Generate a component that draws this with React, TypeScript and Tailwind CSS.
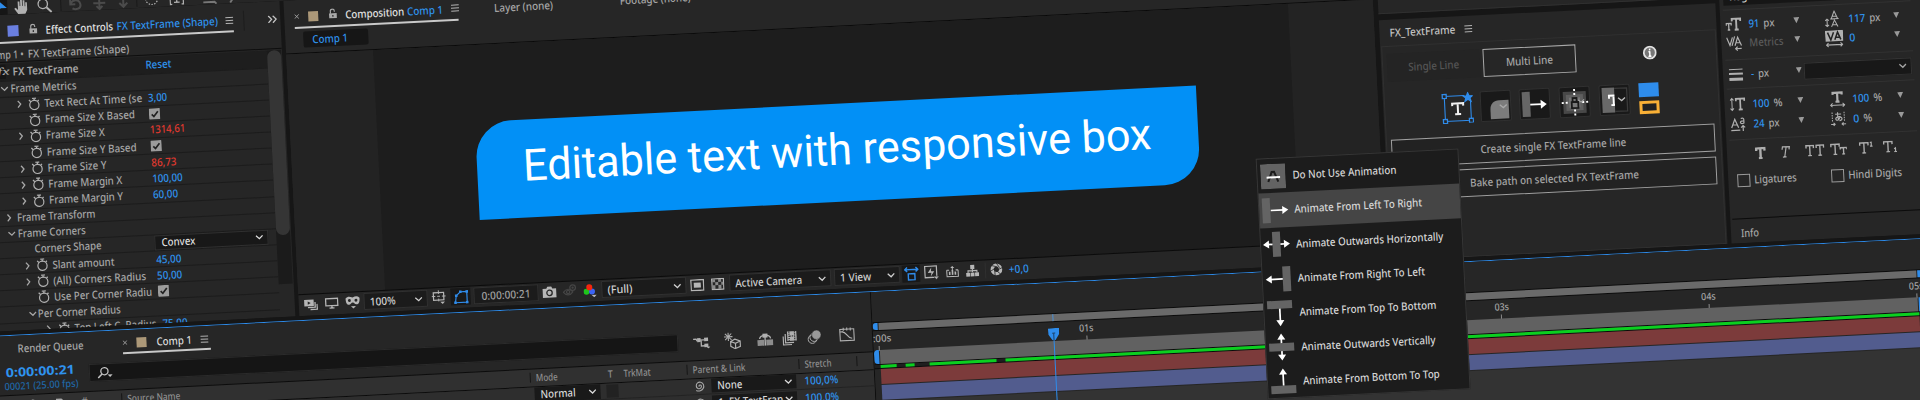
import { useLayoutEffect, useRef, useState } from "react";
import type { ReactNode } from "react";
import { clsx } from "clsx";

type Kids = { children?: ReactNode; className?: string };

/* A line of text squeezed or stretched horizontally to fill the width of its box. */
function Fit({ children, className }: Kids) {
  const box = useRef<HTMLSpanElement>(null);
  const text = useRef<HTMLSpanElement>(null);
  const [scale, setScale] = useState(1);
  useLayoutEffect(() => {
    if (box.current && text.current) {
      const w = parseFloat(getComputedStyle(box.current).width);
      const tw = parseFloat(getComputedStyle(text.current).width);
      if (tw > 0) setScale(w / tw);
    }
  }, [children]);
  return (
    <span ref={box} className={clsx("flex shrink-0 whitespace-nowrap", className)}>
      <span ref={text} className="inline-block shrink-0 origin-left" style={{ transform: `scaleX(${scale})` }}>
        {children}
      </span>
    </span>
  );
}

function Svg({ children, className, box = "0 0 16 16" }: Kids & { box?: string }) {
  return (
    <svg viewBox={box} className={clsx("block shrink-0", className)} fill="none" stroke="currentColor" strokeWidth="1.3">
      {children}
    </svg>
  );
}

const Chevron = ({ className = "" }) => (
  <Svg box="0 0 8 8" className={clsx("size-2", className)}>
    <path d="M.7 2.3 4 5.5l3.3-3.2" />
  </Svg>
);
const Right = ({ className = "" }) => (
  <Svg box="0 0 8 8" className={clsx("size-2 text-[#a8a8a8]", className)}>
    <path d="M2.6 .6 5.4 4 2.6 7.4" />
  </Svg>
);
const Tri = ({ className = "" }) => (
  <Svg box="0 0 6 6" className={clsx("size-[6px]", className)}>
    <path d="M0 0h6L3 6z" fill="currentColor" stroke="none" />
  </Svg>
);
const Burger = ({ className = "" }) => (
  <Svg box="0 0 8 8" className={clsx("size-2 text-[#b4b4b4]", className)}>
    <path d="M0 1h8M0 4h8M0 7h8" strokeWidth="1" />
  </Svg>
);
const Lock = ({ className = "" }) => (
  <Svg box="0 0 10 12" className={clsx("h-[11px] w-[9px] text-[#a9a9a9]", className)}>
    <rect x="1" y="5.5" width="8.5" height="5.5" fill="currentColor" stroke="none" />
    <path d="M2.6 6V3.2a2.2 2.2 0 0 1 4.400 0V4" />
    <path d="M5.200 7.400v2" stroke="#262626" />
  </Svg>
);
const Cross = ({ className = "" }) => (
  <Svg box="0 0 6 6" className={clsx("size-[5px] text-[#a9a9a9]", className)}>
    <path d="m.5 .5 5 5m0-5-5 5" strokeWidth="1" />
  </Svg>
);
const Stopwatch = ({ className = "" }) => (
  <Svg box="0 0 12 13" className={clsx("h-[13px] w-3 text-[#b0b0b0]", className)}>
    <circle cx="6" cy="7.6" r="4.600" strokeWidth="1.2" />
    <path d="M4 .8h4M6 1v2.400M.8 2.400 2.600 4.200M9.400 4 10.600 2.800" strokeWidth="1.3" />
  </Svg>
);
const Check = ({ className = "" }) => (
  <Svg box="0 0 11 11" className={clsx("size-[11.500px]", className)}>
    <rect width="11" height="11" rx="1" fill="#9c9c9c" stroke="none" />
    <path d="m2.600 5.600 2 2.200 4-4.800" stroke="#222" strokeWidth="1.6" />
  </Svg>
);

/* ---------- Effect controls ---------- */

function Row({ children, className }: Kids) {
  return <div className={clsx("flex h-[16.15px] shrink-0 items-center border-t border-[#1c1c1c]", className)}>{children}</div>;
}

function Prop({ label, lw, value, arrow, red, check }: { label: string; lw: string; value?: string; arrow?: boolean; red?: boolean; check?: boolean }) {
  return (
    <Row className="pl-[50px]">
      <span className="w-[13px] shrink-0">{arrow && <Right />}</span>
      <Stopwatch />
      <span className="ml-[4px] w-[103.5px] shrink-0"><Fit className={lw}>{label}</Fit></span>
      {check ? <Check /> : <Fit className={clsx(red ? "text-[#e2392f]" : "text-[#2f93ee]", value === "1314,61" ? "w-[35.5px]" : value === "100,00" ? "w-[30.5px]" : value === "3,00" ? "w-[19px]" : "w-[25px]")}>{value}</Fit>}
    </Row>
  );
}

function EffectControls() {
  return (
    <section className="flex w-[318.5px] shrink-0 flex-col overflow-hidden bg-[#262626]">
      <header className="flex h-[29px] shrink-0 items-start">
        <div className="flex h-[29px] w-[272px] shrink-0 items-center border-b-2 border-[#c9c9c9] pl-[46px]">
          <span className="mt-1.5 size-[11px] shrink-0 bg-[#6a7fe0]" />
          <Lock className="mt-1 ml-[10px]" />
          <Fit className="mt-1.5 ml-[8px] w-[67.5px] text-[#e2e2e2]">Effect Controls</Fit>
          <Fit className="mt-1.5 ml-[3px] w-[101.5px] text-[#2f93ee]">FX TextFrame (Shape)</Fit>
          <Burger className="mt-1.5 ml-[8px]" />
        </div>
        <span className="mt-2 ml-[10px] h-5 w-px bg-[#1d1d1d]" />
        <Svg box="0 0 10 8" className="mt-[14px] ml-[23px] h-2 w-[10px] text-[#c4c4c4]">
          <path d="m1 .5 3.300 3.500L1 7.500M5.500 .5 8.800 4 5.500 7.500" />
        </Svg>
      </header>
      <div className="flex h-[18.500px] shrink-0 items-center border-b border-[#0e0e0e] pt-1 pl-[23px]">
        <Fit className="w-[38px]">Comp 1 •</Fit>
        <Fit className="ml-[4px] w-[101.500px]">FX TextFrame (Shape)</Fit>
      </div>
      <div className="mt-[1.500px] flex min-h-0 flex-1">
        <div className="w-[304px] shrink-0">
          <div className="flex h-[16.500px] items-center bg-[#1e1e1e] pl-[30px]">
            <Fit className="w-[12px] bg-[#161616] pl-[4px] font-serif text-[11px] italic">fx</Fit>
            <Fit className="ml-[7px] w-[66px] font-semibold">FX TextFrame</Fit>
            <Fit className="ml-[67px] w-[26px] text-[#2f93ee]">Reset</Fit>
          </div>
          <Row className="pl-[36px]"><Chevron /><Fit className="ml-[2px] w-[66px]">Frame Metrics</Fit></Row>
          <Prop arrow label="Text Rect At Time (se" lw="w-[98px]" value="3,00" />
          <Prop label="Frame Size X Based" lw="w-[90px]" check />
          <Prop arrow label="Frame Size X" lw="w-[59px]" value="1314,61" red />
          <Prop label="Frame Size Y Based" lw="w-[90px]" check />
          <Prop arrow label="Frame Size Y" lw="w-[59px]" value="86,73" red />
          <Prop arrow label="Frame Margin X" lw="w-[74px]" value="100,00" />
          <Prop arrow label="Frame Margin Y" lw="w-[74px]" value="60,00" />
          <Row className="pl-[34px]"><Right /><Fit className="ml-[4px] w-[78.500px]">Frame Transform</Fit></Row>
          <Row className="pl-[36px]"><Chevron /><Fit className="ml-[2px] w-[68px]">Frame Corners</Fit></Row>
          <Row className="pl-[62px]">
            <Fit className="w-[67px]">Corners Shape</Fit>
            <div className="ml-[53px] flex h-[15px] w-[114px] items-center justify-between border border-[#303030] bg-[#181818] pr-1 pl-[6px] text-[#dedede]">
              <Fit className="w-[34px]">Convex</Fit><Chevron />
            </div>
          </Row>
          <Prop arrow label="Slant amount" lw="w-[62px]" value="45,00" />
          <Prop arrow label="(All) Corners Radius" lw="w-[93px]" value="50,00" />
          <Prop label="Use Per Corner Radiu" lw="w-[98px]" check />
          <Row className="pl-[53px]"><Chevron /><Fit className="ml-[1px] w-[83px]">Per Corner Radius</Fit></Row>
          <Row className="pl-[68px]">
            <Right /><Stopwatch className="ml-[6px]" /><Fit className="ml-[4px] w-[82px]">Top Left C. Radius</Fit>
            <Fit className="ml-[6px] w-[25px] text-[#2f93ee]">75,00</Fit>
          </Row>
        </div>
        <div className="h-[234px] w-[14px] shrink-0 bg-[#1b1b1b]">
          <div className="h-[185px] rounded-full bg-[#353535]" />
        </div>
      </div>
    </section>
  );
}

/* ---------- Composition viewer ---------- */

function Drop({ children, className }: Kids) {
  return (
    <div className={clsx("flex h-[16.500px] shrink-0 items-center justify-between rounded-[1px] border border-[#303030] bg-[#1b1b1b] pr-[4px] pl-[5px] text-[#d0d0d0]", className)}>
      {children}
      <Chevron />
    </div>
  );
}

function Viewer() {
  return (
    <section className="flex w-[1088px] shrink-0 flex-col bg-[#262626]">
      <header className="flex h-[29px] shrink-0 items-start">
        <div className="ml-[10px] flex h-[29px] w-[164px] shrink-0 items-center border-b-2 border-[#c9c9c9]">
          <Cross className="mt-1.5" />
          <span className="mt-1.5 ml-[9px] size-[10px] shrink-0 bg-[#ac9878]" />
          <Lock className="mt-1 ml-[10px]" />
          <Fit className="mt-1.5 ml-[8px] w-[59px] text-[#e2e2e2]">Composition</Fit>
          <Fit className="mt-1.5 ml-[3px] w-[36px] text-[#2f93ee]">Comp 1</Fit>
          <Burger className="mt-1 ml-[8px]" />
        </div>
        <Fit className="mt-[11px] ml-[36px] w-[59px]">Layer (none)</Fit>
        <Fit className="mt-[10px] ml-[67px] w-[71px]">Footage (none)</Fit>
      </header>
      <div className="flex h-[24.500px] shrink-0 items-center border-b border-[#0b0b0b] pl-[18px]">
        <div className="mb-px flex h-[16px] w-[65px] items-center rounded-[2px] bg-[#161616] pl-[9px] text-[#2f93ee]">
          <Fit className="w-[35.500px]">Comp 1</Fit>
        </div>
      </div>
      <div className="flex h-[240px] shrink-0 bg-[#232323] pl-[86.500px]">
        <div className="w-[916px] bg-[#1d1d1d] pt-[77px]">
          <div className="mr-auto ml-[98.500px] flex h-[98.500px] w-[722px] items-center rounded-tl-[36px] rounded-br-[36px] bg-[#0290f6] pl-[46px] font-[Roboto] text-[44px] leading-none font-normal text-white">
            <Fit className="mb-[5px] w-[629px]">Editable text with responsive box</Fit>
          </div>
        </div>
      </div>
      <footer className="flex h-[21px] shrink-0 items-center border-t border-[#0b0b0b] pl-[5px] text-[#b6b6b6]">
        <Svg className="size-[14px]" box="0 0 14 14">
          <rect x=".5" y="2" width="9.500" height="6.500" fill="currentColor" stroke="none" />
          <path d="m4 3.600 3 1.700-3 1.700z" fill="#262626" stroke="none" />
          <path d="M11.300 4.500v5.300H4M13.300 6.500v5.300H6.500" />
        </Svg>
        <Svg className="ml-[7px] h-[13px] w-[14px]" box="0 0 14 13"><rect x="1" y="2" width="12" height="7" /><path d="M7 9v2.200M4.500 11.500h5" /></Svg>
        <Svg className="ml-[6px] size-[16px]">
          <path d="M1 3.500c2-2 4-2 7-.5 3-1.500 5-1.500 7 .5 0 4.500-1 6.500-3.500 6.500C10 10 9.500 8 8 8s-2 2-3.500 2C2 10 1 8 1 3.500z" fill="currentColor" stroke="none" />
          <circle cx="4.700" cy="5.800" r="1.500" fill="#262626" stroke="none" /><circle cx="11.300" cy="5.800" r="1.500" fill="#262626" stroke="none" />
          <path d="M6 11.500h5L8.500 14z" fill="currentColor" stroke="none" />
        </Svg>
        <Drop className="ml-[3px] w-[64px]"><Fit className="w-[26px]">100%</Fit></Drop>
        <Svg className="ml-[4px] size-[15px]"><rect x="2" y="2.500" width="11" height="8" /><path d="M7.500 0v4M7.500 9v3M0 6.500h4M11 6.500h4M6 6.500h3" strokeWidth="1" /><path d="M9 12.500h5L11.500 15z" fill="currentColor" stroke="none" /></Svg>
        <div className="ml-[4px] flex h-[17px] w-[20px] items-center justify-center bg-[#181818] text-[#2f8bea]">
          <Svg className="size-[15px]" box="0 0 14 14"><path d="M1.500 12.500 2.500 6l4-3.500H12.500v10z" strokeWidth="1.100" /><path d="M.3 11.300h2.400v2.400H.3zM11.300 1.300h2.400v2.400h-2.400zM11.300 11.300h2.400v2.400h-2.400zM5.300 1.300h2.400v2.400H5.300zM1.300 4.800h2.400v2.400H1.300z" fill="currentColor" stroke="none" /></Svg>
        </div>
        <div className="ml-[3px] flex h-[16.500px] w-[65px] items-center justify-center border border-[#303030] bg-[#1b1b1b] text-[#a0a0a0]"><Fit className="w-[49px]">0:00:00:21</Fit></div>
        <Svg className="ml-[4px] h-[13px] w-[14px]" box="0 0 14 13"><path d="M0 3h4l1-2h4l1 2h4v9H0z" fill="currentColor" stroke="none" /><circle cx="7" cy="7.300" r="2.700" stroke="#262626" fill="none" /></Svg>
        <Svg className="ml-[6px] size-[15px] text-[#454545]"><path d="M1 9c3-4 7-4 10 0-3 4-7 4-10 0z" /><circle cx="6" cy="9" r="1.700" /><circle cx="11" cy="4.500" r="3" /><circle cx="11" cy="4.500" r=".6" /></Svg>
        <Svg className="ml-[6px] size-[14px]" box="0 0 14 14"><g stroke="none"><circle cx="3" cy="8" r="3" fill="#1ec41b" /><circle cx="8.500" cy="8" r="3" fill="#3b63f3" /><circle cx="6" cy="3.800" r="3" fill="#f5260d" /><path d="M8 11.500h5L10.500 14z" fill="currentColor" /></g></Svg>
        <Drop className="ml-[4px] w-[85px]"><Fit className="w-[25px]">(Full)</Fit></Drop>
        <Svg className="ml-[4px] h-[12px] w-[14px]" box="0 0 14 12"><rect x=".7" y=".7" width="12.600" height="10.600" /><rect x="3.500" y="3.500" width="7" height="5" fill="currentColor" stroke="none" /></Svg>
        <Svg className="ml-[7px] h-[12px] w-[13px]" box="0 0 13 12"><rect x=".6" y=".6" width="11.800" height="10.800" /><path d="M1 1h3v3H1zM7 1h3v3H7zM4 4h3v3H4zM10 4h2v3h-2zM1 7h3v4H1zM7 7h3v4H7z" fill="#8a8a8a" stroke="none" /></Svg>
        <Drop className="ml-[5px] w-[101.500px]"><Fit className="w-[67px]">Active Camera</Fit></Drop>
        <Drop className="ml-[3.500px] w-[66px]"><Fit className="w-[31px]">1 View</Fit></Drop>
        <div className="ml-[2px] flex h-[17px] w-[18px] items-center justify-center bg-[#181818] text-[#2f8bea]">
          <Svg className="size-[15px]"><path d="M1 3.500h14M3.500 1.200 1 3.500l2.500 2.300M12.500 1.200 15 3.500l-2.500 2.300M4.500 8h7v6.500h-7z" strokeWidth="1.500" /></Svg>
        </div>
        <Svg className="ml-[4px] size-[15px]"><rect x="1" y="1" width="12.500" height="12" /><path d="M8 2.500 4 8h4l-1 4 4-5.500H7.500z" fill="currentColor" stroke="none" /><path d="M10 12h6l-3 3.500z" fill="currentColor" stroke="#262626" strokeWidth=".6" /></Svg>
        <Svg className="ml-[7px] size-[13px]"><path d="M1 6v8h14V6M1 6h3M15 6h-3M8 2v5" /><path d="M3.500 8h2v4h-2zM7 6h2v6H7zM10.500 8h2v4h-2zM5.500 3.500 8 1l2.500 2.500z" fill="currentColor" stroke="none" /></Svg>
        <Svg className="ml-[7px] size-[13px]"><path d="M5.500 1h5v5h-5zM0 10.500h5v4.500H0zM5.700 10.500h4.600v4.500H5.700zM11 10.500h5v4.500h-5z" fill="currentColor" stroke="none" /><path d="M8 6v4M2.500 10.500V8h11v2.500" /></Svg>
        <span className="ml-[6px] h-4 w-px bg-[#303030]" />
        <Svg className="ml-[4px] size-[13px]"><circle cx="8" cy="8" r="5.200" strokeWidth="4" /><path d="M8 0 12 6M15.500 6l-7 3M13 14 8 9.500M6 15.500v-7M.5 10l6-3.500M2.500 3l7 2" stroke="#262626" strokeWidth="1" /></Svg>
        <Fit className="ml-[6px] w-[20px] text-[#2f93ee]">+0,0</Fit>
      </footer>
    </section>
  );
}

/* ---------- FX_TextFrame panel ---------- */

function Tile({ children }: Kids) {
  return <div className="flex size-[31px] shrink-0 items-center justify-center rounded-[2px] border border-[#303030] bg-[#191919]">{children}</div>;
}

function FxPanel() {
  return (
    <section className="flex h-[241px] flex-col bg-[#262626]">
      <header className="flex h-[26.500px] shrink-0 items-center pl-[10.500px] text-[#c2c2c2]">
        <Fit className="w-[66px]">FX_TextFrame</Fit>
        <Burger className="ml-[9px]" />
      </header>
      <div className="mx-px flex min-h-0 flex-1 flex-col border border-[#303030] pl-[4px]">
        <div className="mt-[7px] flex h-[28px] items-center">
          <div className="flex h-[28px] w-[93px] items-center justify-center bg-[#242424] text-[#555]"><Fit className="w-[51px]">Single Line</Fit></div>
          <div className="ml-[3.500px] flex h-[28px] w-[93px] items-center justify-center border border-[#a8a8a8]"><Fit className="w-[47px]">Multi Line</Fit></div>
          <Svg className="mb-1 ml-[67px] size-[14px]" box="0 0 14 14"><circle cx="7" cy="7" r="6" fill="#777" stroke="#e2e2e2" strokeWidth="1.800" /><path d="M7 3v1.800M7 5.800V11M5.700 6.200H7M5.500 10.800h3" stroke="#fff" strokeWidth="1.500" /></Svg>
        </div>
        <div className="mt-[13px] flex h-[33px] items-center pl-[52px]">
          <Svg className="h-[31px] w-[32px] text-[#2f8bea]" box="0 0 32 31">
            <path d="M3.500 3.500h20M3.500 3.500v25h26v-20" strokeWidth="1.100" />
            <path d="M1.500 1.500h4v4h-4zM1.500 26.500h4v4h-4zM27.500 26.500h4v4h-4z" fill="#262626" />
            <path d="m27 1 1.300 3h3.200L29 6l1 3.300-3-2-3 2L25 6l-2.500-2h3.200z" fill="currentColor" />
            <path d="M11 13.500V11h11v2.500M16.500 11v11M13.500 21.700h6" stroke="#f0f0f0" strokeWidth="2" />
          </Svg>
          <div className="ml-[7px] flex gap-[8.900px]">
            <Tile><Svg className="size-[29px]" box="0 0 29 29"><path d="M9 27.500V18c0-6 4-9 9-9h9.500v18.500z" fill="#7c7c7c" stroke="none" /><path d="m18.500 13.500 3.500 3 3.500-3" stroke="#a8a8a8" /></Svg></Tile>
            <Tile><Svg className="size-[29px]" box="0 0 29 29"><path d="M2 2h8v25H2z" fill="#666" stroke="none" /><path d="M10 15h12" stroke="#fff" strokeWidth="1.800" /><path d="M20.500 10.500 26.500 15l-6 4.500z" fill="#fff" stroke="none" /></Svg></Tile>
            <Tile><Svg className="size-[29px]" box="0 0 29 29"><path d="M3 4h23v22H3z" fill="#484848" stroke="none" /><path d="M6 7h17v16H6z" fill="#5f5f5f" stroke="none" /><path d="M9 10h11v10H9z" fill="#777" stroke="none" /><path d="M11.500 14.500h6.500v6h-6.500zM12.500 14v-3.500h4V14" stroke="#191919" strokeWidth="1.800" /><path d="M14.500 1.500v6M14.500 22v6M1.500 15h6M22 15h6" stroke="#fff" strokeWidth="1.900" strokeDasharray="2 2" /><path d="m18 12.500 3 2.500 3-2.500" stroke="#aaa" strokeWidth="1" /></Svg></Tile>
            <Tile><Svg className="size-[29px]" box="0 0 29 29"><path d="M2 2h12.500v25H2z" fill="#696969" stroke="none" /><path d="M14.500 3H27v23H14.500" stroke="#3a3a3a" /><path d="M9 13V10h5.500M13.500 10v9.500M11 19.500h3.500" stroke="#fff" strokeWidth="1.900" /><path d="m18 12.500 3.500 3 3.500-3" stroke="#bbb" /></Svg></Tile>
          </div>
          <div className="ml-[9px] flex flex-col gap-1">
            <div className="h-[13.500px] w-[19.500px] bg-[#2e8ceb]" />
            <div className="h-[13.500px] w-[19.500px] border-3 border-[#f9b036] bg-[#222]" />
          </div>
        </div>
        <div className="mt-[12px] flex h-[28px] w-[324.500px] items-center justify-center border border-[#a0a0a0] bg-[#222]"><Fit className="w-[146px]">Create single FX TextFrame line</Fit></div>
        <div className="mt-[4.500px] flex h-[28px] w-[324.500px] items-center justify-center border border-[#a0a0a0] bg-[#222]"><Fit className="w-[169px]">Bake path on selected FX TextFrame</Fit></div>
      </div>
    </section>
  );
}

/* ---------- Character panel ---------- */

function Field({ icon, value, unit, vw, uw, className }: { icon: ReactNode; value: string; unit?: string; vw: string; uw?: string; className?: string }) {
  return (
    <div className={clsx("flex shrink-0 items-center", className)}>
      <span className="flex w-[19px] shrink-0 justify-center text-[#b0b0b0]">{icon}</span>
      <span className="ml-[6px] flex w-[45px] shrink-0 items-center">
        <Fit className={clsx(vw, value === "Metrics" ? "text-[#5a5a5a]" : "text-[#2f93ee]")}>{value}</Fit>
        {unit && <Fit className={clsx("ml-[4px]", uw)}>{unit}</Fit>}
      </span>
      <Tri className="mb-0.5 text-[#9a9a9a]" />
    </div>
  );
}

const serifT = "M0 3V0h9v3M4.500 0v11M2.500 11h4";

function Character() {
  return (
    <section className="flex h-full w-[240px] shrink-0 flex-col bg-[#262626] pl-[3px]">
      <div className="mt-[60px] ml-px flex h-[18px] w-[112px] items-center bg-[#161616] pl-[6px] text-[#d0d0d0]"><Fit className="w-[37px]">Regular</Fit></div>
      <div className="mt-[4px] h-px w-[188px] bg-[#323232]" />
      <div className="mt-[4px] flex h-[19px] items-center">
        <Field icon={<Svg className="size-[16px]"><path d="M6.500 5V2.500H15V5M10.800 2.500v11M9 13.500h4" strokeWidth="1.900" /><path d="M.7 9V7h5v2M3.200 7v6.500M2 13.500h2.500" /></Svg>} value="91" vw="w-[11px]" unit="px" uw="w-[11px]" />
        <Field className="ml-[24px]" icon={<Svg className="size-[17px]"><path d="M6.500 8 9.500.8 12.500 8M7.500 5.500h4M5.500 8h8M6.500 15.500 9.500 9.300l3 6.200M7.500 13.500h4" strokeWidth="1" /><path d="M2.500 8v7M.8 9.500 2.500 8l1.700 1.500M.8 13.500 2.500 15l1.700-1.500" strokeWidth="1" /></Svg>} value="117" vw="w-[17px]" unit="px" uw="w-[11px]" />
      </div>
      <div className="mb-[6px] flex h-[20px] items-center">
        <Field icon={<Svg className="size-[16px]"><path d="m.5 2 3 8 2.800-8M8.500 1l-3 9.500M8.500 10.500l3-8.500 3.500 8.500M9.500 7.500h4.500M9 13.500h6M11 11.500l-2 2 2 2" strokeWidth="1.200" /></Svg>} value="Metrics" vw="w-[34px]" />
        <Field className="ml-[24px]" icon={<Svg className="h-[17px] w-[18px]" box="0 0 18 17"><path d="M0 0h18v11H0z" fill="currentColor" stroke="none" /><path d="m2.500 2 3 7.500L8.500 2M9.500 9.500l3-7.500 3 7.500M10.500 7h4" stroke="#222" strokeWidth="1.500" /><path d="M1 14.500h16M3 12.500l-2 2 2 2M15 12.500l2 2-2 2" strokeWidth="1.100" /></Svg>} value="0" vw="w-[6px]" />
      </div>
      <div className="h-px w-[188px] bg-[#323232]" />
      <div className="flex h-[28px] items-center">
        <Field icon={<Svg className="h-[13px] w-[14px]" box="0 0 14 13"><path d="M0 1h14" strokeWidth="1" /><path d="M0 5.500h14" strokeWidth="2" /><path d="M0 11h14" strokeWidth="3" /></Svg>} value="-" vw="w-[3px]" unit="px" uw="w-[11px]" />
        <div className="ml-[2px] flex h-[17px] w-[108px] items-center justify-end border border-[#323232] bg-[#181818] pr-1"><Chevron /></div>
      </div>
      <div className="h-px w-[188px] bg-[#323232]" />
      <div className="mt-[4px] flex h-[21px] items-center">
        <Field icon={<Svg className="size-[16px]"><path d="M2.500 2v12M.8 4 2.500 2l1.700 2M.8 12l1.700 2 1.700-2" strokeWidth="1" /><path d="M6.500 5V2.500H15V5M10.800 2.500v11M9 13.500h4" strokeWidth="1.700" /></Svg>} value="100" vw="w-[17px]" unit="%" uw="w-[9px]" />
        <Field className="ml-[24px]" icon={<Svg className="size-[16px]"><path d="M3.500 3.500V1.500h9v2M8 1.500v9M6 10.500h4" strokeWidth="2.200" /><path d="M.8 14h14.400M3 12l-2 2 2 2M13 12l2 2-2 2" strokeWidth="1" /></Svg>} value="100" vw="w-[17px]" unit="%" uw="w-[9px]" />
      </div>
      <div className="flex h-[20px] items-center">
        <Field icon={<Svg className="size-[16px]"><path d="M1 11.500 4.500 3 8 11.500M2.200 8.500h4.600M.5 14h9M10.500 2.500c2-1 3 0 3 1V7c-2 1-3.500.5-3.500-.7s2-1.500 3.500-1.300M12.500 15V10M10.500 11.500l2-2 2 2" strokeWidth="1.200" /></Svg>} value="24" vw="w-[11px]" unit="px" uw="w-[11px]" />
        <Field className="ml-[24px]" icon={<Svg className="size-[16px]"><path d="M2 1v9M14 1v9" strokeDasharray="1.500 1" strokeWidth="1" /><path d="M5 3h6M7.500 1c-.5 4 0 6 1 8M10 5c-1 4-4 5-4.500 3S9 4.500 11 6.500 10 9.500 9 9.500M.5 13h4M3 11.500 4.500 13 3 14.500M15.500 13h-4M13 11.500 11.500 13l1.500 1.500" strokeWidth="1.100" /></Svg>} value="0" vw="w-[6px]" unit="%" uw="w-[9px]" />
      </div>
      <div className="mt-[5px] h-px w-[188px] bg-[#323232]" />
      <div className="flex h-[27px] items-center pl-[25px] text-[#adadad]">
        <Svg className="h-[12px] w-[11px]" box="-1 -1 11 13"><path d={serifT} strokeWidth="2.600" /></Svg>
        <Svg className="ml-[13px] h-[12px] w-[12px]" box="-1 -1 12 13"><path d="M2 3 2.500 0H10L9.500 3M6.500 0l-2 11M2.500 11h4" /></Svg>
        <Svg className="ml-[14px] h-[12px] w-[20px]" box="-1 -1 21 13"><path d="M0 3V0h8v3M4 0v11M2 11h4M11 3V0h8v3M15 0v11M13 11h4" strokeWidth="1.500" /></Svg>
        <Svg className="ml-[5px] h-[12px] w-[17px]" box="-1 -1 18 13"><path d="M0 3V0h9v3M4.500 0v11M2.500 11h4M10 6V4h7v2M13.500 4v7M12 11h3" strokeWidth="1.500" /></Svg>
        <Svg className="ml-[12px] h-[12px] w-[14px]" box="-1 -1 15 13"><path d={serifT} strokeWidth="1.500" /><path d="m11 0 1.500-.8V4M11 4h3" /></Svg>
        <Svg className="ml-[10px] h-[12px] w-[14px]" box="-1 -1 15 13"><path d={serifT} strokeWidth="1.500" /><path d="m11 8 1.500-.8v4M11 11.200h3" /></Svg>
      </div>
      <div className="mt-[6px] flex h-[14px] items-center pl-[6px]">
        <span className="size-[13px] border-[1.500px] border-[#9a9a9a]" />
        <Fit className="ml-[4px] w-[42.500px]">Ligatures</Fit>
        <span className="ml-[34px] size-[13px] border-[1.500px] border-[#9a9a9a]" />
        <Fit className="ml-[4px] w-[54px]">Hindi Digits</Fit>
      </div>
      <div className="mt-[31px] ml-[-1px] h-px bg-[#0b0b0b]" />
      <div className="mt-[6px] flex h-[16px] items-center pl-[7px]"><Fit className="w-[18px]">Info</Fit></div>
    </section>
  );
}

/* ---------- Timeline ---------- */

function Head({ children, className }: Kids) {
  return <div className={clsx("flex h-[10px] shrink-0 items-center border-l border-[#161616] pl-[5px]", className)}>{children}</div>;
}

function Layer({ mode, parent, pw }: { mode: string; parent: string; pw: string }) {
  return (
    <div className="flex h-[16.200px] shrink-0 items-center border-b border-[#232323] bg-[#2e2e2e] text-[#d8d8d8]">
      <div className="ml-[553.500px] flex h-[15px] w-[66px] shrink-0 items-center justify-between bg-[#191919] pr-1 pl-[6px]"><Fit className="w-[35px]">{mode}</Fit><Chevron /></div>
      <span className="ml-[6px] h-[13px] w-[12px] shrink-0 bg-[#222]" />
      <Svg className="ml-[75px] size-[12px] text-[#a8a8a8]"><path d="M8 8.500c-1-.5-.5-2 .8-2 2 0 2.500 2.500 1 4-2.300 2-6 .5-6-3C3.800 4 7 2 10 3c3.500 1 4.700 5 3 8s-6 4.500-9.500 2.500" strokeWidth="1.500" /></Svg>
      <div className="ml-[6px] flex h-[14px] w-[85px] shrink-0 items-center justify-between bg-[#191919] pr-1 pl-[6px]"><Fit className={pw}>{parent}</Fit><Chevron /></div>
      <Fit className="ml-[8px] w-[34px] text-[#2f93ee]">100,0%</Fit>
    </div>
  );
}

function Timeline() {
  return (
    <section className="flex h-[190px] bg-[#262626]">
      <div className="flex w-[895px] shrink-0 flex-col overflow-hidden border-r border-[#0e0e0e]">
        <div className="flex h-[24px] shrink-0 items-start pl-[40px]">
          <Fit className="mt-[6px] w-[66px]">Render Queue</Fit>
          <div className="ml-[39px] flex h-[24px] w-[88px] items-center border-b-2 border-[#c9c9c9] pt-[4px]">
            <Cross />
            <span className="ml-[8.500px] size-[10px] bg-[#ac9878]" />
            <Fit className="ml-[10px] w-[35.500px] text-[#dcdcdc]">Comp 1</Fit>
            <Burger className="ml-[9px]" />
          </div>
        </div>
        <div className="flex h-[35px] shrink-0 items-center">
          <div className="ml-[25px] flex w-[85px] flex-col pt-[5px] leading-[13.500px]">
            <Fit className="ml-[2px] w-[69px] text-[12.500px] font-bold text-[#2f93ee]">0:00:00:21</Fit>
            <Fit className="w-[74px] text-[10px] text-[#1f68a8]">00021 (25.00 fps)</Fit>
          </div>
          <div className="flex h-[18px] w-[590px] items-center border border-[#2b2b2b] bg-[#151515] pl-[7px] text-[#c2c2c2]">
            <Svg className="h-[13px] w-[17px]" box="0 0 17 13"><circle cx="7.500" cy="5" r="3.600" /><path d="M5 7.700 1 11.500" strokeWidth="1.600" /><path d="M10.500 8.500h5L13 11z" fill="currentColor" stroke="none" /></Svg>
          </div>
          <div className="flex items-center text-[#b0b0b0]">
            <Svg className="ml-[15px] h-[13px] w-[17px]" box="0 0 17 13"><path d="M0 3h3l1 2M5 4h6M8 4v6h4" /><path d="M4 2h3.500v4H4zM11 2h4v3.500h-4zM11 8h4v3.500h-4z" fill="currentColor" stroke="none" /><path d="M13 11h4l-2 2z" fill="currentColor" stroke="none" /></Svg>
            <Svg className="ml-[14px] size-[17px]"><path d="M4 0v8M0 4h8M1 1l6 6M7 1 1 7" strokeWidth="1" /><path d="m10 6.500 5 2v5l-5 2-4-2.500V8.500zM6 8.500l4.500 2 4.500-2M10.500 10.500v5" strokeWidth="1.100" /></Svg>
            <Svg className="ml-[16px] h-[13px] w-[16px]" box="0 0 16 13"><path d="M0 7h7v6H0zM9 7h7v6H9z" fill="#8c8c8c" stroke="none" /><path d="M8 3v10M2.500 6C3 3 5 2.500 8 2.500S13 3 13.500 6" /><path d="M5.500 1h5v4h-5z" fill="currentColor" stroke="none" /></Svg>
            <Svg className="ml-[9px] size-[15px]"><path d="M5.500 1h10v10h-10z" fill="currentColor" stroke="none" /><path d="M3.500 3.500v9.500h9M1.200 6v9.200h9" /><path d="M7.500 1v10M13.500 1v10M8 6h5" stroke="#262626" strokeDasharray="1.300 1" /></Svg>
            <Svg className="ml-[10px] size-[15px]"><circle cx="5.500" cy="10.500" r="4.500" strokeWidth="1" /><circle cx="7.500" cy="8.500" r="4.500" strokeWidth="1" /><circle cx="10" cy="6" r="5" fill="#999" stroke="#262626" strokeWidth=".6" /></Svg>
            <Svg className="ml-[17px] size-[16px]"><rect x="1" y="2.500" width="14" height="11.500" strokeWidth="1.100" /><path d="M3 5c5 0 4 6 10 7M1 5h3M4.500 1v3M8 1v3M11.500 1v3" strokeWidth="1.100" /></Svg>
          </div>
        </div>
        <div className="flex h-[19px] shrink-0 items-center border-y border-[#0c0c0c] bg-[#303030] text-[10px] text-[#8f8f8f]">
          <div className="flex h-full w-[141px] items-center pl-[47px]">
            <Svg className="size-[11px] text-[#aaa]"><circle cx="8" cy="7" r="4" /></Svg>
            <Svg className="ml-[17px] size-[11px] text-[#aaa]"><path d="M1 3h8l6 6-5 6-9-9z" fill="currentColor" stroke="none" /></Svg>
            <span className="ml-[15px]">#</span>
          </div>
          <Head className="w-[409px]"><Fit className="w-[53px]">Source Name</Fit></Head>
          <Head className="w-[76px]"><Fit className="w-[22px]">Mode</Fit></Head>
          <Fit className="ml-[2px] w-[5px]">T</Fit>
          <Fit className="ml-[11px] w-[27px]">TrkMat</Fit>
          <Head className="ml-[36px] w-[112px]"><Fit className="w-[53px]">Parent &amp; Link</Fit></Head>
          <Head className="w-[58px]"><Fit className="w-[27px]">Stretch</Fit></Head>
          <Head />
        </div>
        <Layer mode="Normal" parent="None" pw="w-[25px]" />
        <Layer mode="Normal" parent="1. FX TextFran" pw="w-[65px]" />
        <div className="flex-1 bg-[#333]" />
      </div>
      <div className="relative flex flex-1 flex-col overflow-hidden bg-[#262626]">
        <div className="mt-[30px] flex h-[9.500px] w-[1052px] shrink-0 border-y border-[#0c0c0c]">
          <span className="w-[5px] rounded-l-full bg-[#2e8ceb]" />
          <span className="ml-px flex-1 bg-[#6a6a6a]" />
          <span className="ml-px w-[6px] bg-[#2e8ceb]" />
        </div>
        <div className="ml-[-98px] flex h-[18.500px] shrink-0 text-[10px] text-[#a4a4a4]">
          {["0:00s", "01s", "02s", "03s", "04s", "05s"].map((t) => (
            <div key={t} className="flex w-[207.700px] shrink-0 flex-col items-center justify-between leading-[15px]">
              <Fit className={t === "0:00s" ? "w-[24px]" : "w-[14.500px]"}>{t}</Fit>
              <span className="h-[5px] w-px shrink-0 bg-[#8d8d8d]" />
            </div>
          ))}
        </div>
        <div className="flex h-[15px] w-[1052px] shrink-0 border-b border-[#0c0c0c]">
          <span className="w-[5px] rounded-l-sm bg-[#2e8ceb]" />
          <span className="ml-px flex-1 bg-[#616161]" />
          <span className="ml-px w-[6px] bg-[#2e8ceb]" />
        </div>
        <div className="flex h-[4.500px] shrink-0 border-b border-[#0c0c0c] bg-[#1f1f1f] pt-[.5px] pl-[6px]">
          <span className="h-[2.500px] w-[16px] bg-[#0bcf20]" />
          <span className="ml-[9px] h-[2.500px] w-[9px] bg-[#0bcf20]" />
          <span className="ml-[15px] h-[2.500px] w-[67px] bg-[#0bcf20]" />
          <span className="ml-[9px] h-[2.500px] w-[915px] bg-[#0bcf20]" />
        </div>
        <div className="ml-[6px] h-[15px] w-[1040px] shrink-0 bg-[#7c3b3b]" />
        <div className="mt-px ml-[6px] h-[15px] w-[1040px] shrink-0 bg-[#525c8e]" />
        <div className="mt-px flex-1 bg-[#333]" />
        <div className="absolute top-[31.500px] left-[174px] flex h-[160px] w-[12px] flex-col items-center text-[#2e8ceb]">
          <span className="h-[7px] w-px bg-[#4b8fd2]" />
          <Svg className="mt-[7px] h-[12px] w-[11px]" box="0 0 11 12"><path d="M0 0h11v6L7 12H4L0 6z" fill="currentColor" stroke="none" /><path d="M5.500 5v7M4 5h3" stroke="#1b3f66" strokeWidth="1" /></Svg>
          <span className="w-px flex-1 bg-[#2e8ceb]" />
        </div>
      </div>
    </section>
  );
}

/* ---------- Animation menu ---------- */

const menu: { label: string; w: string; bar: string; lines: string; heads: string }[] = [
  { label: "Animate From Left To Right", w: "w-[128px]", bar: "M0 0h8v25H0z", lines: "M8.500 12.500h13", heads: "M20 8.500 26 12.500 20 16.500z" },
  { label: "Animate Outwards Horizontally", w: "w-[147.500px]", bar: "M8.500 0h8v25h-8z", lines: "M3 12.500h5.500M16.500 12.500H22", heads: "M20 8.500 26 12.500 20 16.500zM5 8.500-1 12.500 5 16.500z" },
  { label: "Animate From Right To Left", w: "w-[127.500px]", bar: "M17 0h8v25h-8z", lines: "M3 12.500h14", heads: "M6 8.500 0 12.500 6 16.500z" },
  { label: "Animate From Top To Bottom", w: "w-[137px]", bar: "M0 0h25v8H0z", lines: "M12.500 8v13", heads: "M8.500 19.500 12.500 25.500 16.500 19.500z" },
  { label: "Animate Outwards Vertically", w: "w-[134.500px]", bar: "M0 8.500h25v8H0z", lines: "M12.500 3v5.500M12.500 16.500V22", heads: "M8.500 20 12.500 26 16.500 20zM8.500 5 12.500-1 16.500 5z" },
  { label: "Animate From Bottom To Top", w: "w-[137px]", bar: "M0 17h25v8H0z", lines: "M12.500 4v13", heads: "M8.500 6 12.500 0 16.500 6z" },
];

function Menu() {
  return (
    <div className="absolute top-[222px] left-[1286px] flex h-[241px] w-[203px] flex-col border border-[#363636] bg-[#1c1c1c] text-[#d6d6d6]">
      <div className="flex h-[34.300px] shrink-0 items-center pl-[3px]">
        <Svg className="size-[25px]" box="0 0 25 25"><path d="M0 0h25v25H0z" fill="#636363" stroke="none" /><path d="M7.500 18 11.300 8h2.400l3.800 10" stroke="#1c1c1c" strokeWidth="2" /><path d="M6 13.500h13.500" stroke="#fff" strokeWidth="2" /></Svg>
        <Fit className="ml-[7px] w-[104px]">Do Not Use Animation</Fit>
      </div>
      {menu.map((m, i) => (
        <div key={m.label} className={clsx("flex h-[34.300px] shrink-0 items-center pl-[3px]", i === 0 && "bg-[#454545]")}>
          <Svg className="size-[25px] overflow-visible" box="0 0 25 25">
            <path d={m.bar} fill="#646464" stroke="none" />
            <path d={m.lines} stroke="#fff" strokeWidth="1.700" />
            <path d={m.heads} fill="#fff" stroke="none" />
          </Svg>
          <Fit className={clsx("ml-[7px]", m.w)}>{m.label}</Fit>
        </div>
      ))}
    </div>
  );
}

function Toolbar() {
  return (
    <div className="flex h-[15px] shrink-0 items-center bg-[#262626] pl-[28px] text-[#b0b0b0]">
      <div className="h-[15px] w-[19px] bg-[#161616]"><Svg className="ml-2 size-[12px] text-[#2e8ceb]"><path d="M2 0v14l4-3 8 0z" fill="currentColor" stroke="none" /></Svg></div>
      <Svg className="ml-[6px] size-[16px]"><path d="M4.500 15 .8 9.500l1.500-1L4.500 11V2.500h1.800V7h.7V.8h1.800V7h.7V1.500h1.800V7.500h.7V3.500h1.700V11l-2 4z" fill="currentColor" stroke="none" /></Svg>
      <Svg className="ml-[7px] size-[16px]"><circle cx="6.500" cy="6" r="4.700" /><path d="m10 9.500 5 5" strokeWidth="2" /></Svg>
      <span className="ml-[8px] h-[12px] w-px bg-[#1a1a1a]" />
      <div className="flex items-center gap-[8px] pl-[6px] text-[#4b4b4b]">
        <Svg className="size-[16px]"><path d="M3 3v5h5M3 7c3-4 9-4 10 1s-5 6-8 4" strokeWidth="2" /></Svg>
        <Svg className="size-[16px]"><path d="M8 1v13M2 8h12M5 11l3 3 3-3" strokeWidth="2" /></Svg>
        <Svg className="size-[16px]"><path d="M8 1v11M4 9l4 4 4-4" strokeWidth="2" /></Svg>
      </div>
      <span className="ml-[5px] h-[12px] w-px bg-[#1a1a1a]" />
      <div className="flex items-center gap-[10px] pl-[7px]">
        <Svg className="size-[15px]"><circle cx="8" cy="6.500" r="6.500" strokeDasharray="1.500 1.500" /></Svg>
        <Svg className="size-[15px]"><path d="M3 2H1v12h2M13 2h2v12h-2M5 12h6M8 4v8" /></Svg>
        <Svg className="ml-2 size-[15px] text-[#777]"><path d="M1 13.500h12l2 2" strokeWidth="2" /></Svg>
        <Svg className="size-[15px] text-[#777]"><path d="M3 15 12 3" strokeWidth="2" /></Svg>
      </div>
    </div>
  );
}

export default function App() {
  return (
    <div className="h-[400px] w-[1920px] overflow-hidden bg-[#262626]">
      <div className="relative -ml-[40px] flex h-[525px] w-[2000px] origin-[40px_0px] -rotate-[2.9deg] flex-col bg-[#161616] font-['Noto_Sans',sans-serif] text-[11px] leading-[14px] font-medium text-[#a6a6a6]">
        <Toolbar />
        <div className="flex h-[316px] shrink-0 overflow-hidden">
          <EffectControls />
          <div className="w-[4.500px] shrink-0" />
          <Viewer />
          <div className="flex w-[346px] shrink-0 flex-col px-[4.500px]">
            <div className="mb-[5.500px] h-[69px] shrink-0 border-b border-[#303030] bg-[#262626]" />
            <FxPanel />
          </div>
          <Character />
        </div>
        <div className="mt-[3.500px] h-[1.300px] shrink-0 bg-[#2e8ceb]" />
        <Timeline />
        <Menu />
      </div>
    </div>
  );
}
